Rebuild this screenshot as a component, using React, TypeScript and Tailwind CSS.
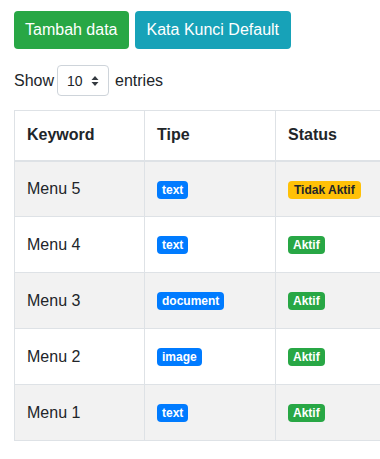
import React from 'react';

type Row = {
  keyword: string;
  tipe: string;
  aktif: boolean;
};

const rows: Row[] = [
  { keyword: 'Menu 5', tipe: 'text', aktif: false },
  { keyword: 'Menu 4', tipe: 'text', aktif: true },
  { keyword: 'Menu 3', tipe: 'document', aktif: true },
  { keyword: 'Menu 2', tipe: 'image', aktif: true },
  { keyword: 'Menu 1', tipe: 'text', aktif: true },
];

export default function App() {
  return (
    <div
      className="w-[380px] h-[459px] overflow-hidden bg-white text-[#212529] text-base"
      style={{ fontFamily: '"Liberation Sans", Arial, sans-serif' }}
    >
      <div className="pl-[14px] pt-[11px]">
        <div className="flex gap-[6px]">
          <button className="h-[38px] px-[11px] rounded bg-[#28a745] text-white leading-6">
            Tambah data
          </button>
          <button className="h-[38px] px-3 rounded bg-[#17a2b8] text-white leading-6">
            Kata Kunci Default
          </button>
        </div>

        <div className="flex items-center mt-[16px] h-[31px]">
          <span>Show</span>
          <div className="ml-[3px] w-[52px] h-[31px] border border-[#ced4da] rounded flex items-center pl-[9px] pr-[9px] justify-between">
            <span className="text-sm">10</span>
            <svg className="w-[8px] h-[12px]" viewBox="0 0 8 12" fill="#343a40">
              <path d="M4 1L7.5 5H0.5z" />
              <path d="M4 11L0.5 7H7.5z" />
            </svg>
          </div>
          <span className="ml-[6px]">entries</span>
        </div>

        <div className="mt-[14px] overflow-hidden">
          <table className="border-collapse w-[560px] table-fixed">
            <thead>
              <tr>
                <th className="w-[130px] h-[50px] px-3 text-left font-bold border border-[#dee2e6] border-b-2">
                  Keyword
                </th>
                <th className="w-[131px] h-[50px] px-3 text-left font-bold border border-[#dee2e6] border-b-2">
                  Tipe
                </th>
                <th className="h-[50px] px-3 text-left font-bold border border-[#dee2e6] border-b-2">
                  Status
                </th>
              </tr>
            </thead>
            <tbody>
              {rows.map((r, i) => (
                <tr key={r.keyword} className={i % 2 === 0 ? 'bg-[#f2f2f2]' : 'bg-white'}>
                  <td className="h-[56px] px-3 border border-[#dee2e6]">{r.keyword}</td>
                  <td className="h-[56px] px-3 border border-[#dee2e6]">
                    <span className="inline-block rounded bg-[#007bff] text-white text-xs font-bold px-[5px] leading-[18px] align-middle">
                      {r.tipe}
                    </span>
                  </td>
                  <td className="h-[56px] px-3 border border-[#dee2e6]">
                    {r.aktif ? (
                      <span className="inline-block rounded bg-[#28a745] text-white text-xs font-bold px-[5px] leading-[18px] align-middle">
                        Aktif
                      </span>
                    ) : (
                      <span className="inline-block rounded bg-[#ffc107] text-[#212529] text-xs font-bold px-[6px] leading-[18px] align-middle">
                        Tidak Aktif
                      </span>
                    )}
                  </td>
                </tr>
              ))}
            </tbody>
          </table>
        </div>
      </div>
    </div>
  );
}
